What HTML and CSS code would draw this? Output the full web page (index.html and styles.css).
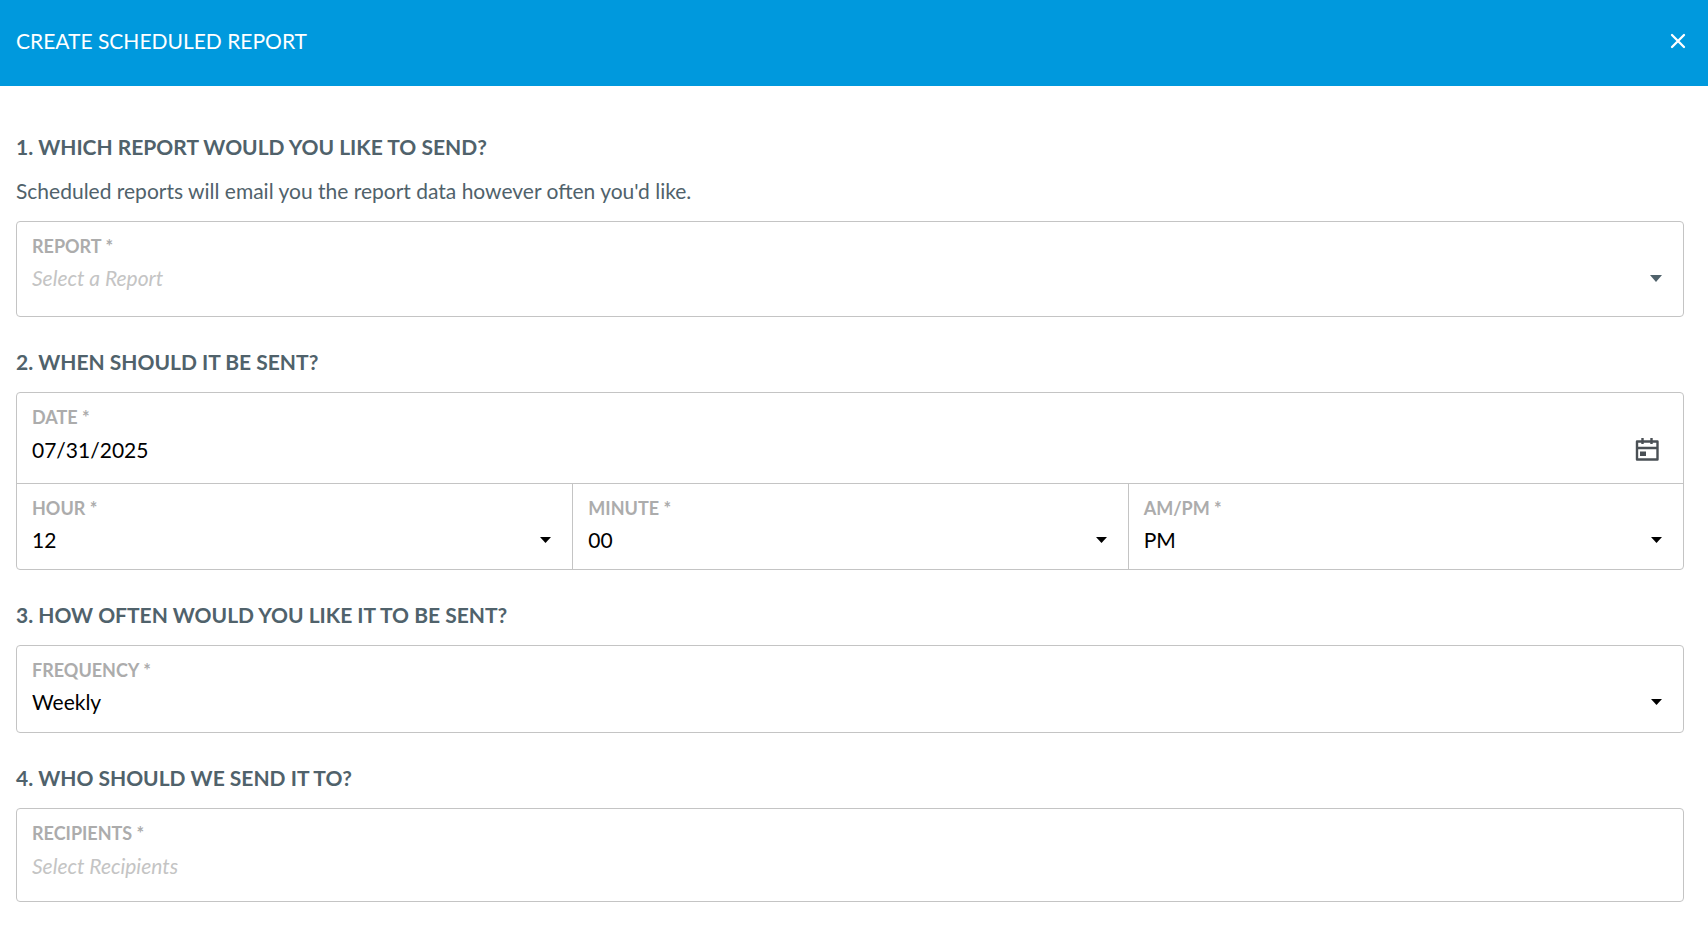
FILE: index.html
```html
<!DOCTYPE html>
<html lang="en">
<head>
  <meta charset="UTF-8">
  <meta name="viewport" content="width=device-width, initial-scale=1">
  <title>Create Scheduled Report</title>
  <link rel="stylesheet" href="styles.css">
</head>
<body>

<header class="modal-header">
  <h1>CREATE SCHEDULED REPORT</h1>
  <button class="close-btn" type="button" aria-label="Close">
    <svg width="16" height="16" viewBox="0 0 16 16"><path d="M2 2L14 14M14 2L2 14" fill="none" stroke="currentColor" stroke-width="2.3" stroke-linecap="round"/></svg>
  </button>
</header>

<form class="report-form">
  <section>
    <h2>1. WHICH REPORT WOULD YOU LIKE TO SEND?</h2>
    <p class="hint">Scheduled reports will email you the report data however often you'd like.</p>
    <div class="box">
      <div class="field field-report">
        <label for="report">REPORT *</label>
        <div class="control">
          <select id="report" class="empty">
            <option>Select a Report</option>
          </select>
          <svg class="arrow arrow-muted" width="12" height="7" viewBox="0 0 12 7"><path d="M0 0H12L6 7Z" fill="currentColor"/></svg>
        </div>
      </div>
    </div>
  </section>

  <section>
    <h2>2. WHEN SHOULD IT BE SENT?</h2>
    <div class="box">
      <div class="field field-date">
        <label for="date">DATE *</label>
        <div class="control">
          <input id="date" type="text" value="07/31/2025">
          <button class="calendar-btn" type="button" aria-label="Open calendar">
            <svg width="24" height="24" viewBox="0 0 24 24">
              <path d="M2 4.5H22.5V22.5H2ZM2 11H22.5" fill="none" stroke="currentColor" stroke-width="2.4" stroke-linejoin="round"/>
              <path d="M7.5 1V7M16.5 1V7" fill="none" stroke="currentColor" stroke-width="2.4"/>
              <path d="M5 14.5H11V19H5Z" fill="currentColor"/>
            </svg>
          </button>
        </div>
      </div>
      <div class="time-row">
        <div class="field">
          <label for="hour">HOUR *</label>
          <div class="control">
            <select id="hour">
              <option>12</option>
            </select>
            <svg class="arrow" width="11" height="6" viewBox="0 0 11 6"><path d="M0 0H11L5.5 6Z" fill="currentColor"/></svg>
          </div>
        </div>
        <div class="field">
          <label for="minute">MINUTE *</label>
          <div class="control">
            <select id="minute">
              <option>00</option>
            </select>
            <svg class="arrow" width="11" height="6" viewBox="0 0 11 6"><path d="M0 0H11L5.5 6Z" fill="currentColor"/></svg>
          </div>
        </div>
        <div class="field">
          <label for="ampm">AM/PM *</label>
          <div class="control">
            <select id="ampm">
              <option>PM</option>
              <option>AM</option>
            </select>
            <svg class="arrow" width="11" height="6" viewBox="0 0 11 6"><path d="M0 0H11L5.5 6Z" fill="currentColor"/></svg>
          </div>
        </div>
      </div>
    </div>
  </section>

  <section>
    <h2>3. HOW OFTEN WOULD YOU LIKE IT TO BE SENT?</h2>
    <div class="box">
      <div class="field">
        <label for="frequency">FREQUENCY *</label>
        <div class="control">
          <select id="frequency">
            <option>Weekly</option>
          </select>
          <svg class="arrow" width="11" height="6" viewBox="0 0 11 6"><path d="M0 0H11L5.5 6Z" fill="currentColor"/></svg>
        </div>
      </div>
    </div>
  </section>

  <section>
    <h2>4. WHO SHOULD WE SEND IT TO?</h2>
    <div class="box">
      <div class="field field-recipients">
        <label for="recipients">RECIPIENTS *</label>
        <div class="control">
          <input id="recipients" type="text" placeholder="Select Recipients">
        </div>
      </div>
    </div>
  </section>
</form>

</body>
</html>
```
FILE: styles.css
```css
* {
  box-sizing: border-box;
}

body {
  font-family: Lato, sans-serif;
  font-size: 21px;
  line-height: 32px;
  color: #50626b;
  background-color: #fff;
  margin: 0;
}

.modal-header {
  display: flex;
  align-items: center;
  justify-content: space-between;
  padding: 25px 22px 29px 16px;
  background-color: #0099dd;
  color: #fff;
}

.modal-header h1 {
  margin: 0;
  font-size: 21px;
  font-weight: 400;
}

.close-btn,
.calendar-btn {
  display: flex;
  padding: 0;
  border: none;
  background: none;
  color: inherit;
  cursor: pointer;
}

.report-form {
  padding: 16px 24px 40px 16px;
}

h2 {
  margin: 29px 0 14px;
  font-size: 21px;
  font-weight: 700;
}

.hint {
  margin: 0 0 16px;
  line-height: 28px;
}

.box {
  border: 1px solid #c4c4c4;
  border-radius: 4px;
}

.field {
  padding: 12px 20px 10px 15px;
}

.field label {
  display: block;
  font-size: 18px;
  line-height: 24px;
  font-weight: 700;
  color: #acacac;
}

.field-report {
  padding-bottom: 18px;
}

.field-date {
  padding-bottom: 14px;
}

.field-recipients {
  padding-bottom: 16px;
}

/* the arrow shares the grid cell with its select */
.control {
  display: grid;
  align-items: center;
}

.control > * {
  grid-area: 1 / 1;
}

.control select,
.control input {
  appearance: none;
  width: 100%;
  height: 40px;
  padding: 0;
  border: none;
  outline: none;
  background: none;
  font: inherit;
  color: #000;
}

.control .empty,
.control input::placeholder {
  font-style: italic;
  color: #c4c4c4;
  opacity: 1;
}

.arrow {
  justify-self: end;
  margin-right: 1px;
  color: #000;
  pointer-events: none;
}

.arrow-muted {
  color: #50626b;
}

.calendar-btn {
  justify-self: end;
  margin-right: 4px;
  color: #4a5055;
}

.time-row {
  display: grid;
  grid-template-columns: repeat(3, 1fr);
  border-top: 1px solid #c4c4c4;
}

.time-row .field {
  padding-bottom: 9px;
}

.time-row .field + .field {
  border-left: 1px solid #c4c4c4;
}
```
